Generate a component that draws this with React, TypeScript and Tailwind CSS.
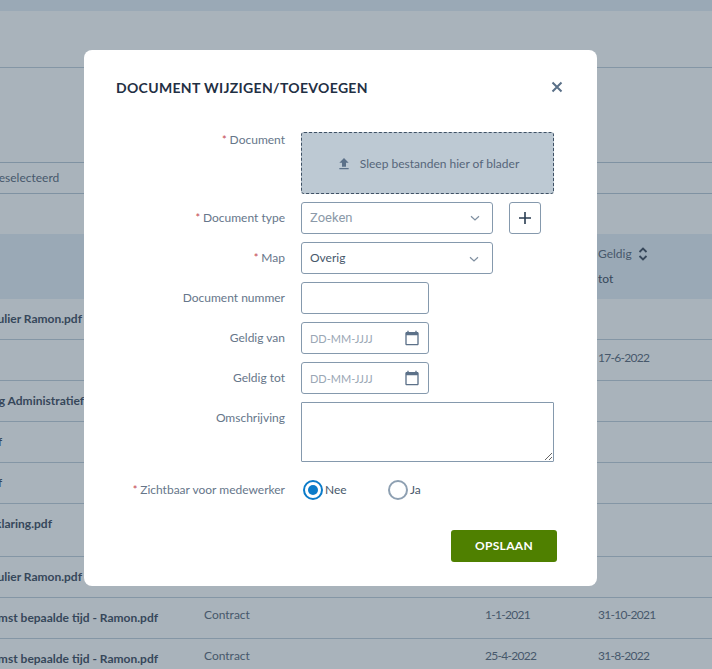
const rows = [
  { h: "h-[40px]", pad: "pr-[122px]", name: "Formulier Ramon.pdf", type: "", from: "", to: "", textY: "pb-0" },
  { h: "h-[40px]", pad: "pr-[122px]", name: "", type: "", from: "", to: "17-6-2022", textY: "pb-[4px]" },
  { h: "h-[40px]", pad: "pr-[120px]", name: "Verklaring Administratief", type: "", from: "", to: "", textY: "pb-[3px]" },
  { h: "h-[40px]", pad: "pr-[202px]", name: "Bestand.pdf", type: "", from: "", to: "", textY: "pb-[3px]" },
  { h: "h-[40px]", pad: "pr-[202px]", name: "Bestand.pdf", type: "", from: "", to: "", textY: "pb-[3px]" },
  { h: "h-[52px]", pad: "pr-[152px] pb-[13px]", name: "Verklaring.pdf", type: "", from: "", to: "", textY: "pb-[3px]" },
  { h: "h-[40px]", pad: "pr-[122px]", name: "Formulier Ramon.pdf", type: "", from: "", to: "", textY: "pb-[3px]" },
  { h: "h-[40px]", pad: "pr-[46px]", name: "Overeenkomst bepaalde tijd - Ramon.pdf", type: "Contract", from: "1-1-2021", to: "31-10-2021", textY: "pb-[6px]" },
  { h: "h-[40px]", pad: "pr-[46px]", name: "Overeenkomst bepaalde tijd - Ramon.pdf", type: "Contract", from: "25-4-2022", to: "31-8-2022", textY: "pb-[6px]" },
];

function Chevron() {
  return (
    <svg width="12" height="12" viewBox="0 0 12 12" fill="none" stroke="#7f8fa0" strokeWidth="1.2" className="absolute right-[12px] top-[10px]">
      <path d="M2 4.2l4 3.8 4-3.8" />
    </svg>
  );
}

function CalendarIcon() {
  return (
    <svg width="16" height="16" viewBox="0 0 24 24" fill="#5c7189" className="absolute right-[9px] top-[8px]">
      <path d="M20 3h-1V1h-2v2H7V1H5v2H4c-1.100 0-2 .9-2 2v16c0 1.100.9 2 2 2h16c1.100 0 2-.9 2-2V5c0-1.100-.9-2-2-2zm0 18H4V8h16v13z" />
    </svg>
  );
}

function Label({ text, required, className }: { text: string; required?: boolean; className?: string }) {
  return (
    <div className={"w-[169px] shrink-0 text-right leading-[16px] text-[#66768a] " + (className ?? "pt-[8px]")}>
      {required && <span className="text-[#c4474f] text-[11px]">* </span>}
      {text}
    </div>
  );
}

function DateField() {
  return (
    <div className="relative w-[128px] h-[32px]">
      <input
        placeholder="DD-MM-JJJJ"
        className="w-full h-full rounded-[3px] border border-[#8599ad] pl-[8px] text-[11px] outline-none placeholder:text-[#9aa7b5]"
      />
      <CalendarIcon />
    </div>
  );
}

export default function App() {
  return (
    <div className="relative w-[712px] h-[669px] overflow-hidden bg-[#a9b3bb] text-[12px] text-[#47586b] font-['Lato',sans-serif]">
      <div className="h-[11px] bg-[#9aa9b6]" />
      <div className="h-[57px] border-b border-[#8496a5]" />
      <div className="h-[94px]" />
      <div className="h-[32px] border-y border-[#7f92a2] flex items-center">
        <span className="-ml-[10px]">Geselecteerd</span>
      </div>
      <div className="h-[40px]" />

      <div className="h-[65px] bg-[#9aa9b6] flex">
        <div className="ml-[598px] pt-[10px]">
          <div className="flex items-center gap-[6px] h-[20px]">
            Geldig
            <svg width="10" height="14" viewBox="0 0 10 14" fill="none" stroke="#36475a" strokeWidth="1.800">
              <path d="M1.500 5l3.500-3.500L8.500 5M1.500 9l3.500 3.500L8.500 9" />
            </svg>
          </div>
          <div className="mt-[6px] text-[#36475a]">tot</div>
        </div>
      </div>

      {rows.map((row, i) => (
        <div key={i} className={"flex items-center border-b border-[#8496a5] box-content " + row.h}>
          <div className={"w-[204px] shrink-0 flex justify-end whitespace-nowrap font-bold text-[#36475a] " + row.pad}>
            {row.name}
          </div>
          <div className={"w-[281px] shrink-0 " + row.textY}>{row.type}</div>
          <div className={"w-[113px] shrink-0 tracking-[-0.7px] " + row.textY}>{row.from}</div>
          <div className={"tracking-[-0.7px] " + row.textY}>{row.to}</div>
        </div>
      ))}

      <div className="absolute left-[84px] top-[50px] w-[513px] h-[536px] rounded-[8px] bg-white px-[32px] pt-[28px]">
        <div className="flex items-center justify-between h-[18px]">
          <h2 className="text-[14px] font-bold tracking-[0.33px] text-[#1f3044]">DOCUMENT WIJZIGEN/TOEVOEGEN</h2>
          <svg width="12" height="12" viewBox="0 0 12 12" stroke="#5a7088" strokeWidth="2" className="mr-[2px]">
            <path d="M1.500 1.500l9 9M10.500 1.500l-9 9" />
          </svg>
        </div>

        <div className="mt-[36px] flex flex-col gap-[8px]">
          <div className="flex gap-[16px]">
            <Label text="Document" required className="" />
            <div className="w-[253px] h-[62px] pt-[2px] rounded-[3px] border border-dashed border-[#3f5165] bg-[#bdc9d3] flex items-center justify-center gap-[8px] text-[#56667a]">
              <svg width="16" height="16" viewBox="0 0 24 24" fill="#5c7189">
                <path d="M9 16h6v-6h4l-7-7-7 7h4v6zm-4 2h14v2H5z" />
              </svg>
              Sleep bestanden hier of blader
            </div>
          </div>

          <div className="flex gap-[16px]">
            <Label text="Document type" required />
            <div className="relative w-[192px] h-[32px]">
              <input
                placeholder="Zoeken"
                className="w-full h-full rounded-[3px] border border-[#8599ad] pl-[8px] pb-[1px] text-[13px] font-['Roboto',sans-serif] outline-none placeholder:text-[#8c9aa9]"
              />
              <Chevron />
            </div>
            <button className="w-[32px] h-[32px] rounded-[3px] border border-[#8599ad] flex items-center justify-center">
              <svg width="14" height="14" viewBox="0 0 14 14" stroke="#2a3d52" strokeWidth="1.600">
                <path d="M7 1v12M1 7h12" />
              </svg>
            </button>
          </div>

          <div className="flex gap-[16px]">
            <Label text="Map" required />
            <div className="relative w-[192px] h-[32px] rounded-[3px] border border-[#8599ad] pl-[8px] leading-[30px] text-[#47586b]">
              Overig
              <Chevron />
            </div>
          </div>

          <div className="flex gap-[16px]">
            <Label text="Document nummer" />
            <input className="w-[128px] h-[32px] rounded-[3px] border border-[#8599ad] outline-none" />
          </div>

          <div className="flex gap-[16px]">
            <Label text="Geldig van" />
            <DateField />
          </div>

          <div className="flex gap-[16px]">
            <Label text="Geldig tot" />
            <DateField />
          </div>

          <div className="flex gap-[16px]">
            <Label text="Omschrijving" />
            <textarea className="block w-[253px] h-[60px] rounded-[1px] border border-[#8599ad] outline-none" />
          </div>

          <div className="flex gap-[16px] h-[40px] items-center">
            <Label text="Zichtbaar voor medewerker" required className="" />
            <div className="flex items-center pl-[2px]">
              <span className="w-[20px] h-[20px] rounded-full border-[2px] border-[#0b7bc9] flex items-center justify-center">
                <span className="w-[10px] h-[10px] rounded-full bg-[#0b7bc9]" />
              </span>
              <span className="ml-[2px] w-[63px]">Nee</span>
              <span className="w-[20px] h-[20px] rounded-full border-[2px] border-[#8ea0b2]" />
              <span className="ml-[2px]">Ja</span>
            </div>
          </div>
        </div>

        <div className="mt-[20px] flex justify-end pr-[8px]">
          <button className="w-[106px] h-[32px] rounded-[3px] bg-[#4f8000] text-[12px] tracking-[0.3px] font-bold text-white">OPSLAAN</button>
        </div>
      </div>
    </div>
  );
}
